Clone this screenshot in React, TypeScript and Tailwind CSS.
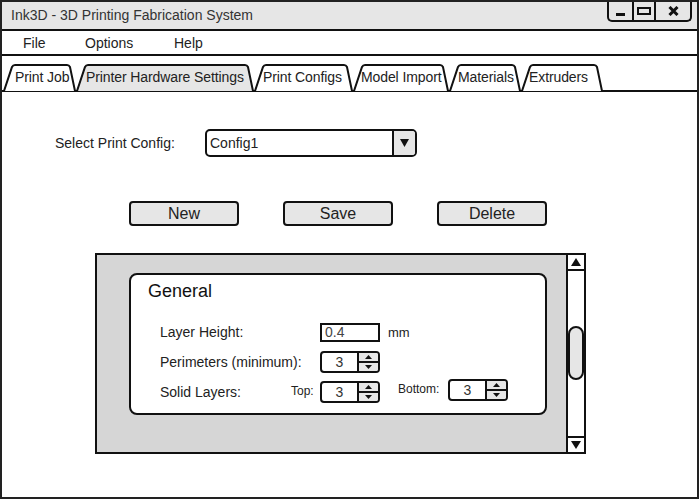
import type { ReactNode } from 'react'

const tabs = [
  { label: 'Print Job', width: 73, pad: 12, active: false },
  { label: 'Printer Hardware Settings', width: 178, pad: 10, active: true },
  { label: 'Print Configs', width: 99, pad: 9, active: false },
  { label: 'Model Import', width: 96, pad: 8, active: false },
  { label: 'Materials', width: 72, pad: 9, active: false },
  { label: 'Extruders', width: 82, pad: 8, active: false },
]

function Tab({ label, width, pad, active }: { label: string; width: number; pad: number; active: boolean }) {
  const h = 27
  const d = `M1,${h} L9,3 Q10,1 12,1 L${width - 9},1 Q${width - 7},1 ${width - 6},3 L${width - 1},${h}`
  return (
    <div className="relative h-[26px] shrink-0" style={{ width }}>
      <svg className="absolute left-0 top-0" width={width} height={h} viewBox={`0 0 ${width} ${h}`}>
        <path d={d} fill={active ? '#e6e6e6' : '#ffffff'} stroke="#111" strokeWidth="2" />
      </svg>
      <span
        className="relative z-10 block pt-[5px] text-[14px] leading-[17px] tracking-[-0.1px] text-[#222] whitespace-nowrap"
        style={{ paddingLeft: pad }}
      >
        {label}
      </span>
    </div>
  )
}

function Tri({ up, w, h }: { up?: boolean; w: number; h: number }) {
  return (
    <svg width={w} height={h} viewBox={`0 0 ${w} ${h}`}>
      <polygon points={up ? `0,${h} ${w / 2},0 ${w},${h}` : `0,0 ${w},0 ${w / 2},${h}`} fill="#111" />
    </svg>
  )
}

function Spinner({ value }: { value: string }) {
  return (
    <div className="flex h-[22px] w-[60px] rounded-[4px] border-2 border-[#111] bg-white overflow-hidden">
      <div className="flex flex-1 items-center justify-center text-[14px] text-[#333]">{value}</div>
      <div className="flex w-[21px] flex-col border-l-2 border-[#111] bg-[#e6e6e6]">
        <div className="flex flex-1 items-center justify-center border-b border-[#111]">
          <Tri up w={7} h={4} />
        </div>
        <div className="flex flex-1 items-center justify-center border-t border-[#111]">
          <Tri w={7} h={4} />
        </div>
      </div>
    </div>
  )
}

function Button({ children }: { children: ReactNode }) {
  return (
    <div className="flex h-[25px] w-[110px] items-center justify-center rounded-[4px] border-2 border-[#111] bg-[#e6e6e6] text-[16px] text-[#222]">
      {children}
    </div>
  )
}

export default function App() {
  return (
    <div className="h-[499px] w-[699px] border-2 border-[#222] bg-white font-['Liberation_Sans',Arial,sans-serif] text-[#111] flex flex-col">
      {/* Title bar */}
      <div className="flex h-[29px] items-start justify-between border-b-2 border-[#111] bg-[#e6e6e6]">
        <span className="pl-[9px] pt-[5px] text-[14px] leading-[17px] text-[#333]">
          Ink3D - 3D Printing Fabrication System
        </span>
        <div className="mr-[5px] flex h-[20px] rounded-b-[5px] border-2 border-t-0 border-[#111] bg-[#e6e6e6]">
          <div className="flex w-[23px] items-end justify-center pb-[4px]">
            <div className="h-[3px] w-[9px] bg-[#111]" />
          </div>
          <div className="flex w-[22px] items-center justify-center border-l-2 border-[#111]">
            <div className="h-[8px] w-[14px] border-2 border-[#111]" />
          </div>
          <div className="flex w-[36px] items-center justify-center border-l-2 border-[#111]">
            <svg width="11" height="10" viewBox="0 0 11 10">
              <path d="M1.5,1 L9.5,9 M9.5,1 L1.5,9" stroke="#111" strokeWidth="3" />
            </svg>
          </div>
        </div>
      </div>

      {/* Menu bar */}
      <div className="flex h-[25px] items-center border-b-2 border-[#111] pt-[2px] text-[14px] text-[#222]">
        <span className="ml-[21px] w-[62px]">File</span>
        <span className="w-[89px]">Options</span>
        <span>Help</span>
      </div>

      {/* Tabs */}
      <div className="flex h-[36px] items-end border-b-2 border-[#111] pl-[1px]">
        {tabs.map((t) => (
          <Tab key={t.label} {...t} />
        ))}
      </div>

      {/* Content */}
      <div className="flex flex-1 flex-col pl-[53px] pt-[37px]">
        <div className="flex items-center">
          <span className="w-[150px] text-[14px] text-[#222]">Select Print Config:</span>
          <div className="flex h-[28px] w-[212px] rounded-[5px] border-2 border-[#111] overflow-hidden">
            <div className="flex flex-1 items-center pl-[3px] text-[14px] text-[#222]">Config1</div>
            <div className="flex w-[23px] items-center justify-center border-l-2 border-[#111] bg-[#e6e6e6]">
              <Tri w={9} h={8} />
            </div>
          </div>
        </div>

        <div className="ml-[74px] mt-[44px] flex gap-[44px]">
          <Button>New</Button>
          <Button>Save</Button>
          <Button>Delete</Button>
        </div>

        <div className="ml-[40px] mt-[27px] flex h-[201px] w-[491px] border-2 border-[#111]">
          <div className="flex-1 bg-[#d6d6d6] pl-[32px] pt-[18px]">
            <div className="h-[142px] w-[418px] rounded-[8px] border-2 border-[#111] bg-white">
              <div className="ml-[17px] mt-[6px] text-[18px] leading-[21px] text-[#111]">General</div>
              <div className="mt-[21px] flex flex-col pl-[29px] text-[14px] text-[#222]">
                <div className="flex h-[19px] items-center">
                  <span className="w-[160px]">Layer Height:</span>
                  <div className="flex h-[19px] w-[60px] items-center border-2 border-[#111] pl-[3px] text-[14px] text-[#444]">
                    0.4
                  </div>
                  <span className="ml-[8px] text-[13px]">mm</span>
                </div>
                <div className="mt-[9px] flex h-[22px] items-center">
                  <span className="w-[160px]">Perimeters (minimum):</span>
                  <Spinner value="3" />
                </div>
                <div className="mt-[8px] flex h-[22px] items-center">
                  <span className="w-[131px]">Solid Layers:</span>
                  <span className="w-[29px] pb-[2px] text-[12px]">Top:</span>
                  <Spinner value="3" />
                  <div className="mb-[4px] flex items-center">
                    <span className="ml-[18px] w-[50px] pb-[2px] text-[12px]">Bottom:</span>
                    <Spinner value="3" />
                  </div>
                </div>
              </div>
            </div>
          </div>
          <div className="flex w-[18px] flex-col border-l-2 border-[#111] bg-white">
            <div className="flex h-[16px] items-center justify-center border-b-2 border-[#111]">
              <Tri up w={10} h={8} />
            </div>
            <div className="flex-1 pt-[55px]">
              <div className="h-[54px] rounded-full border-2 border-[#111] bg-[#e6e6e6]" />
            </div>
            <div className="flex h-[16px] items-center justify-center border-t-2 border-[#111]">
              <Tri w={10} h={8} />
            </div>
          </div>
        </div>
      </div>
    </div>
  )
}
